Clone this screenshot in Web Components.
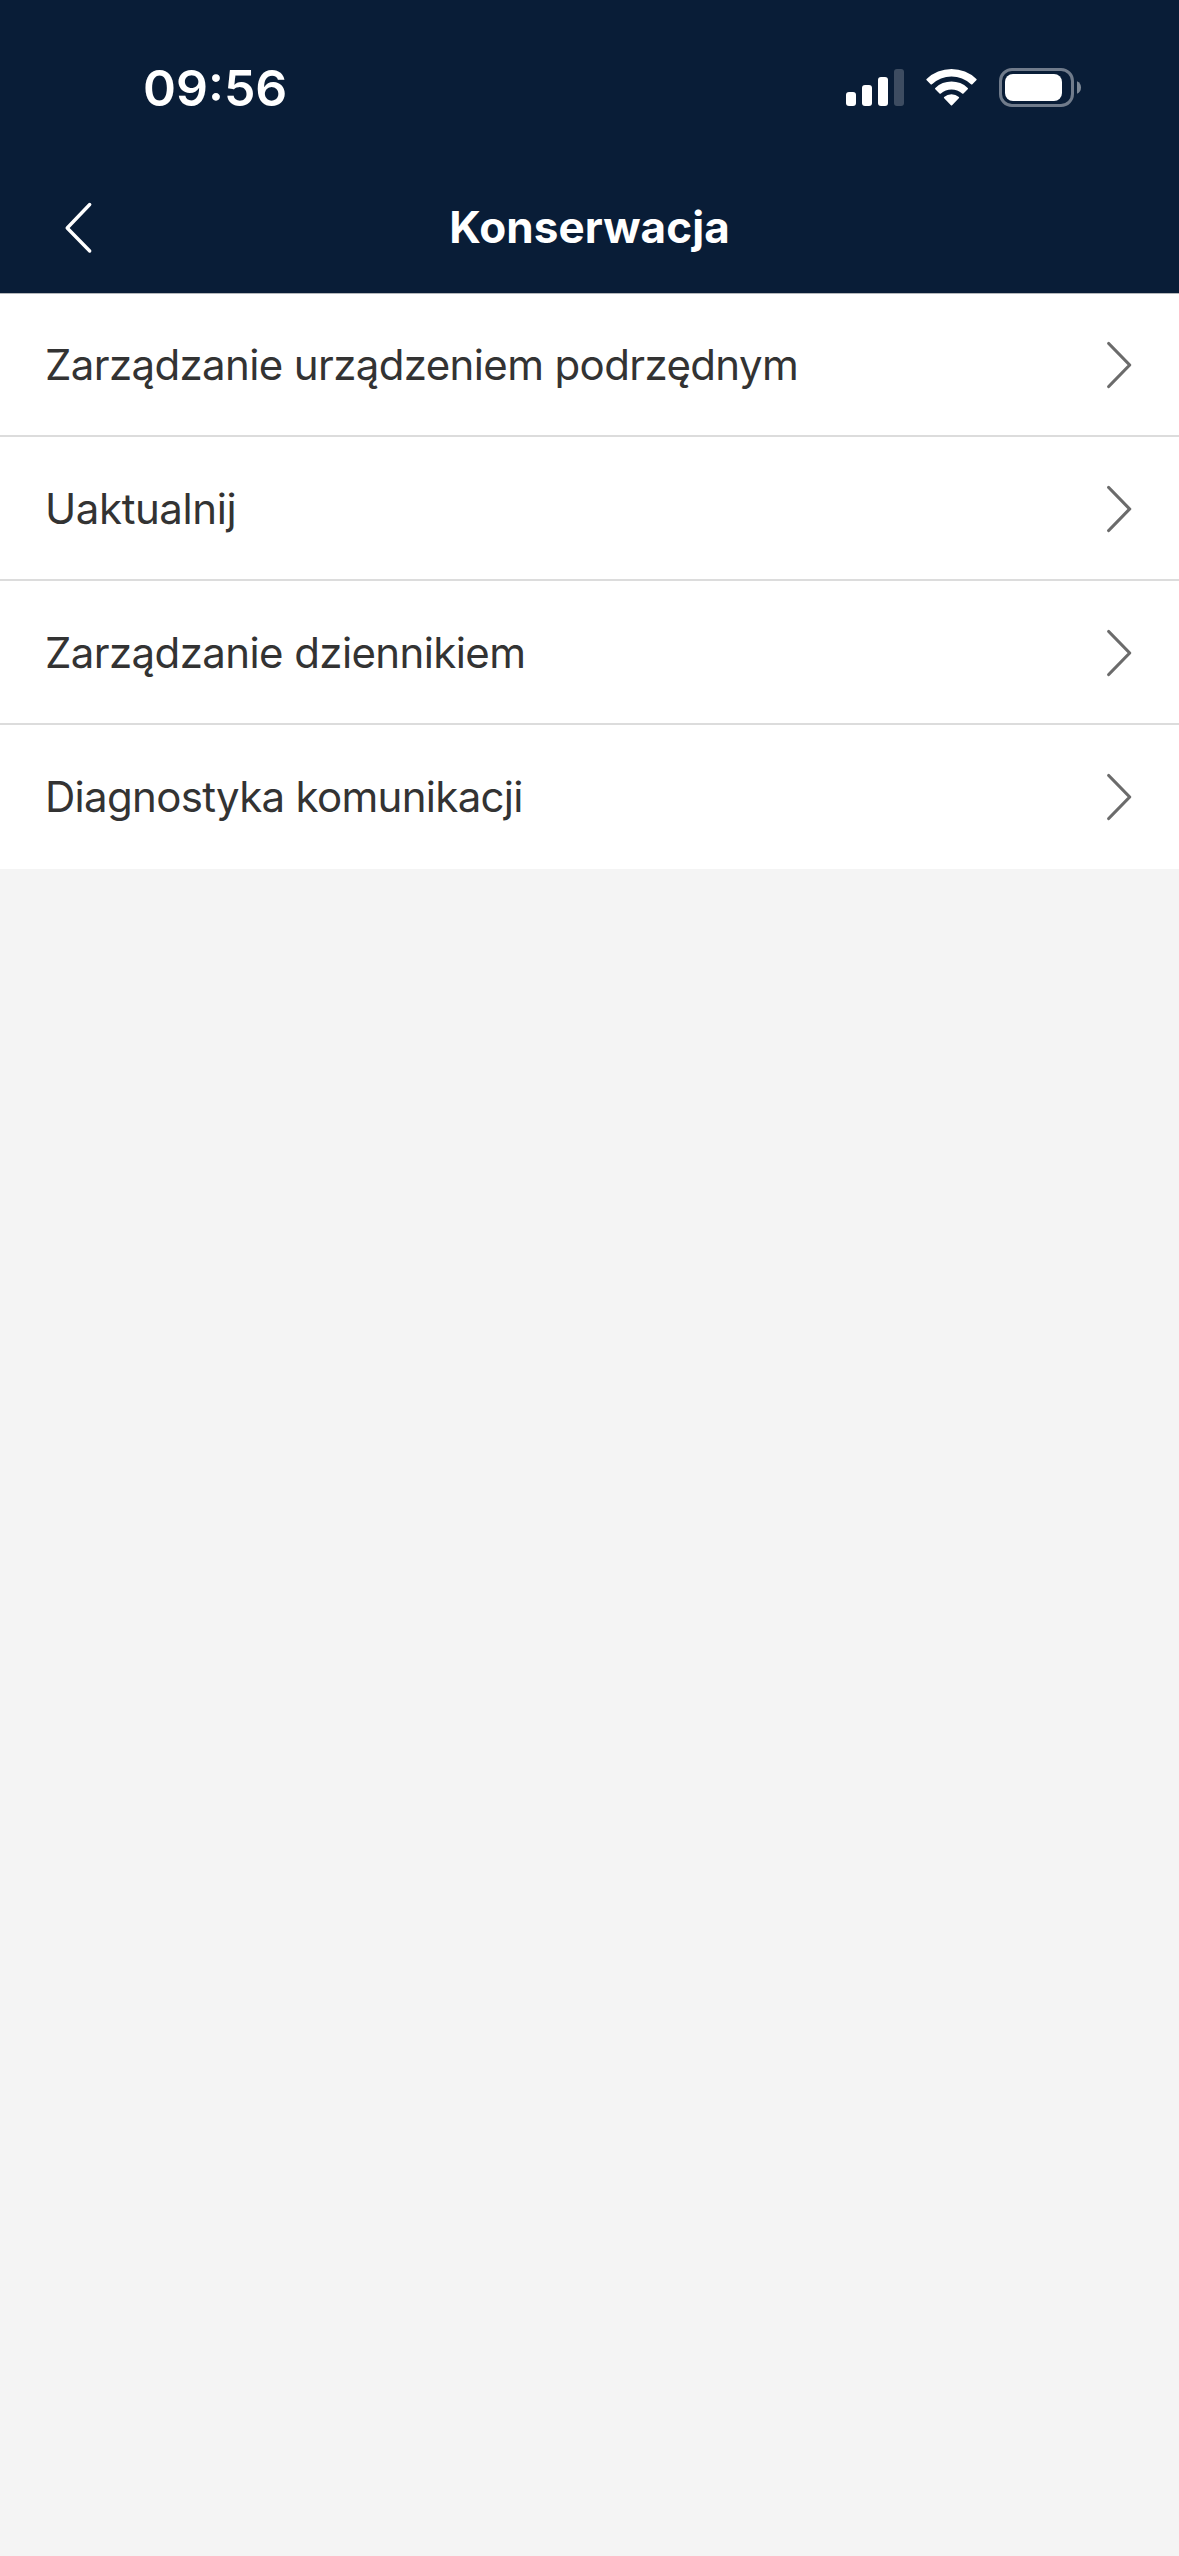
<!DOCTYPE html>
<html lang="pl">
<head>
<meta charset="UTF-8">
<title>Konserwacja</title>
<style>
    body {
        margin: 0;
        min-height: 2556px;
        background: #f4f4f4;
        font-family: Inter, Roboto, "Liberation Sans", sans-serif;
    }
</style>
</head>
<body>
<app-screen>
    <status-bar slot="top" time="09:56"></status-bar>
    <nav-header slot="top">Konserwacja</nav-header>
    <menu-row style="--track: -0.63px">Zarządzanie urządzeniem podrzędnym</menu-row>
    <menu-row style="--track: -0.42px">Uaktualnij</menu-row>
    <menu-row style="--track: -0.6px">Zarządzanie dziennikiem</menu-row>
    <menu-row style="--track: -0.69px">Diagnostyka komunikacji</menu-row>
</app-screen>

<script>
class AppScreen extends HTMLElement {
    constructor() {
        super();
        this.attachShadow({ mode: 'open' });
        this.shadowRoot.innerHTML = `
            <style>
                :host {
                    display: flex;
                    flex-direction: column;
                    width: 1179px;
                    min-height: 2556px;
                    overflow: hidden;
                }
                header {
                    background: #091d37;
                    height: 293px;
                }
                main {
                    display: flex;
                    flex-direction: column;
                    box-sizing: border-box;
                    height: 576px;
                    background: #fff;
                    border-top: 1px solid #b4b7ba;
                }
            </style>
            <header><slot name="top"></slot></header>
            <main><slot></slot></main>
        `;
    }
}

class StatusBar extends HTMLElement {
    constructor() {
        super();
        this.attachShadow({ mode: 'open' });
        this.shadowRoot.innerHTML = `
            <style>
                :host {
                    display: flex;
                    justify-content: space-between;
                    box-sizing: border-box;
                    height: 160px;
                    padding: 58px 97px 0 143px;
                    color: #fff;
                }
                .time {
                    font-size: 50px;
                    font-weight: 600;
                    line-height: 60px;
                    letter-spacing: 0;
                }
                .icons {
                    display: flex;
                    gap: 22px;
                    padding-top: 9px;
                }
                svg {
                    display: block;
                }
            </style>
            <div class="time"></div>
            <div class="icons">
                <svg width="58" height="42" viewBox="0 0 58 42" fill="#fff">
                    <rect x="0" y="25" width="10" height="14" rx="3"/>
                    <rect x="16" y="18" width="10" height="21" rx="3"/>
                    <rect x="32" y="10" width="10" height="29" rx="3"/>
                    <rect x="48" y="2" width="10" height="37" rx="3" opacity="0.21"/>
                </svg>
                <svg width="51" height="42" viewBox="0 0 51 42" fill="#fff">
                    <path d="M0.6 11.9 Q0 12.6 0.7 13.3 L4.6 17.2 Q5.3 17.9 6 17.2 A28.5 28.5 0 0 1 45 17.2 Q45.7 17.9 46.4 17.2 L50.3 13.3 Q51 12.6 50.4 11.9 A36 36 0 0 0 0.6 11.9Z"/>
                    <path d="M9.3 20.9 Q8.6 21.6 9.3 22.3 L13.5 26.4 Q14.2 27 14.9 26.4 A16 16 0 0 1 36.1 26.4 Q36.8 27 37.5 26.4 L41.7 22.3 Q42.4 21.6 41.7 20.9 A23.5 23.5 0 0 0 9.3 20.9Z"/>
                    <path d="M18.1 29.9 Q17.5 30.5 18.2 31.2 L24.9 38.2 Q25.5 38.8 26.1 38.2 L32.8 31.2 Q33.5 30.5 32.9 29.9 A11.5 11.5 0 0 0 18.1 29.9Z"/>
                </svg>
                <svg width="83" height="42" viewBox="0 0 83 42" fill="none">
                    <rect x="1.5" y="2.5" width="72" height="36" rx="11.5" stroke="#fff" stroke-opacity="0.42" stroke-width="3"/>
                    <rect x="6" y="7" width="57" height="27" rx="8" fill="#fff"/>
                    <path d="M78 14.3 A6.8 6.8 0 0 1 78 26.7Z" fill="#fff" opacity="0.47"/>
                </svg>
            </div>
        `;
    }

    connectedCallback() {
        this.shadowRoot.querySelector('.time').textContent = this.getAttribute('time');
    }
}

class NavHeader extends HTMLElement {
    constructor() {
        super();
        this.attachShadow({ mode: 'open' });
        this.shadowRoot.innerHTML = `
            <style>
                :host {
                    display: grid;
                    grid-template-columns: 120px 1fr 120px;
                    align-items: center;
                    height: 132px;
                    color: #fff;
                }
                svg {
                    display: block;
                    margin-left: 60px;
                    margin-top: 3px;
                }
                h1 {
                    margin: 2px 0 0;
                    text-align: center;
                    font-size: 44px;
                    font-weight: 700;
                    line-height: 60px;
                    letter-spacing: 0.1px;
                }
            </style>
            <svg width="36" height="56" viewBox="0 0 36 56" fill="none" stroke="#fff" stroke-width="3.4" stroke-linecap="round" stroke-linejoin="round">
                <path d="M29.7 4.5 L7.2 28 L29.7 51"/>
            </svg>
            <h1><slot></slot></h1>
        `;
    }
}

class MenuRow extends HTMLElement {
    constructor() {
        super();
        this.attachShadow({ mode: 'open' });
        this.shadowRoot.innerHTML = `
            <style>
                :host {
                    display: flex;
                    align-items: center;
                    justify-content: space-between;
                    box-sizing: border-box;
                    height: 144px;
                    padding: 2px 46px 0 45px;
                    background: #fff;
                    border-bottom: 2px solid #dcdcdc;
                    color: #333;
                }
                :host(:first-of-type) {
                    height: 143px;
                    padding-top: 1px;
                }
                :host(:last-of-type) {
                    border-bottom-color: #fff;
                }
                .label {
                    font-size: 42px;
                    line-height: 60px;
                    letter-spacing: var(--track, 0);
                    white-space: nowrap;
                }
                svg {
                    display: block;
                }
            </style>
            <div class="label"><slot></slot></div>
            <svg width="28" height="50" viewBox="0 0 28 50" fill="none" stroke="#6b6b6b" stroke-width="3.2" stroke-linecap="round" stroke-linejoin="round">
                <path d="M3.7 3.5 L24.7 25 L3.7 46.5"/>
            </svg>
        `;
    }
}

customElements.define('app-screen', AppScreen);
customElements.define('status-bar', StatusBar);
customElements.define('nav-header', NavHeader);
customElements.define('menu-row', MenuRow);
</script>
</body>
</html>
